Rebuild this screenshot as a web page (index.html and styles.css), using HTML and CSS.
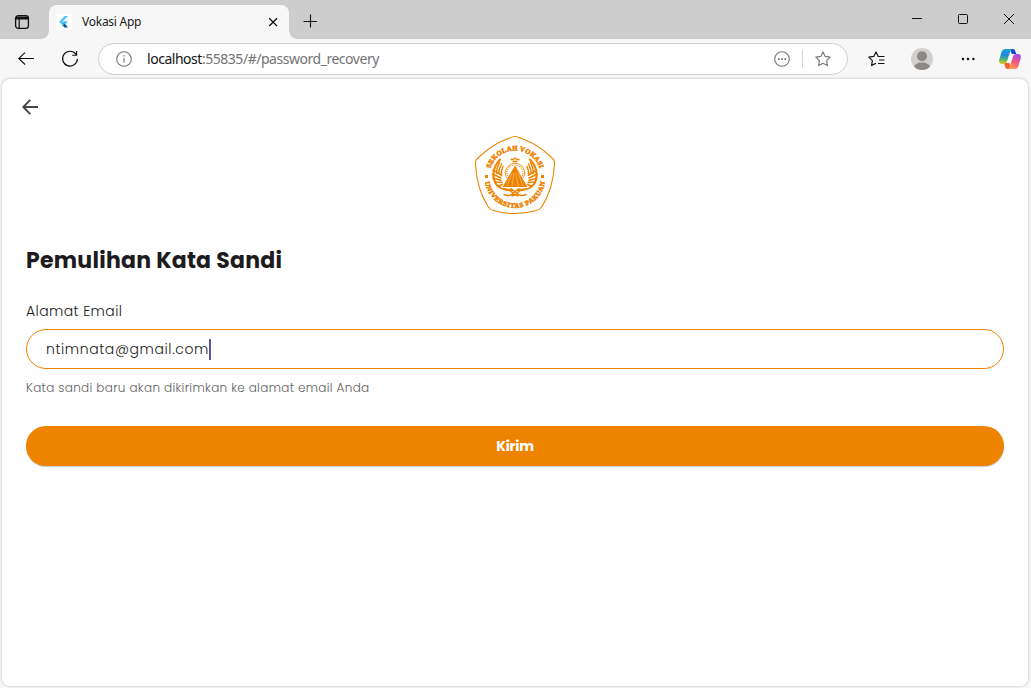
FILE: index.html
```html
<!DOCTYPE html>
<html lang="id">
<head>
<meta charset="utf-8">
<title>Vokasi App</title>
<link rel="stylesheet" href="styles.css">
</head>
<body>
<div class="window">
  <header class="titlebar">
    <svg class="workspaces" width="16" height="16" viewBox="0 0 16 16" fill="none" stroke="#111"><rect x="1.6" y="1.6" width="12.8" height="12.8" rx="2.6" stroke-width="1.3"/><path d="M2 4h12" stroke-width="3"/><path d="M5.2 5v9" stroke-width="1.2"/></svg>
    <div class="tab">
      <svg class="favicon" width="16" height="16" viewBox="0 0 16 16"><path fill="#fff" d="M0 0h16v16H0z"/><path fill="#54c5f8" d="M8.500 2h3.500L5 9.500 3 8z"/><path fill="#41b9f5" d="M8.500 7.300H12l-4 4-2-2z"/><path fill="#01579b" d="M6.500 11.300l2-2 3.500 4.200H8.500z"/><path fill="#29b6f6" d="M5 9.400l2-2 2 2-2 2z"/></svg>
      <span class="tab-title">Vokasi App</span>
      <svg class="tab-close" width="10" height="10" viewBox="0 0 10 10" stroke="#111" stroke-width="1.3"><path d="M1.200 1.200l7.800 7.800M9 1.200L1.200 9"/></svg>
    </div>
    <svg class="new-tab" width="14" height="14" viewBox="0 0 14 14" stroke="#111" stroke-width="1.1"><path d="M7.5.5v13M.5 7.5h13.5"/></svg>
    <div class="window-controls">
      <svg width="10" height="10" viewBox="0 0 10 10" stroke="#111"><path d="M0 4.5h10"/></svg>
      <svg width="10" height="10" viewBox="0 0 10 10" fill="none" stroke="#111"><rect x=".5" y=".5" width="9" height="9" rx="1"/></svg>
      <svg width="10" height="10" viewBox="0 0 10 10" stroke="#111"><path d="M0 0l10 10M10 0L0 10"/></svg>
    </div>
  </header>

  <nav class="toolbar">
    <svg class="nav-back" width="16" height="14" viewBox="0 0 16 14" fill="none" stroke="#111" stroke-width="1.1"><path d="M7 .6L.8 6.500 7 12.500M.8 6.500H16"/></svg>
    <svg class="nav-reload" width="18" height="18" viewBox="0 0 18 18" fill="none" stroke="#111" stroke-width="1.15"><path d="M15 4.3A7.4 7.4 0 1 0 16.4 9M15.6 1v4.2h-4.4"/></svg>
    <div class="address">
      <svg class="info" width="16" height="16" viewBox="0 0 16 16" fill="none" stroke="#767676" stroke-width="1.1"><circle cx="8" cy="8" r="7.3"/><path d="M8 7v4.8M8 4v1.6"/></svg>
      <span class="url"><b>localhost</b>:55835/#/password_recovery</span>
      <svg class="more-circle" width="16" height="16" viewBox="0 0 16 16"><circle cx="8" cy="8" r="7.3" fill="none" stroke="#767676" stroke-width="1.1"/><path d="M4 7.2h1.7v1.7H4zM7.2 7.2h1.7v1.7H7.2zM10.4 7.2h1.7v1.7h-1.7z" fill="#767676"/></svg>
      <i class="divider"></i>
      <svg class="star" width="16" height="16" viewBox="0 0 16 16" fill="none" stroke="#767676" stroke-width="1.1" stroke-linejoin="round"><path d="M8 .9l2.2 4.5 5 .7-3.6 3.5.8 5L8 12.3l-4.4 2.3.8-5L.8 6.1l5-.7z"/></svg>
    </div>
    <svg class="favorites" width="17" height="16" viewBox="0 0 17 16" fill="none" stroke="#111" stroke-width="1.15" stroke-linejoin="round"><path d="M10.3 5.5L8 .9 5.8 5.4l-5 .7 3.6 3.5-.8 5L8 12.3M9.500 5.5H16.500M11 9H16.500M10 12.5H16.500"/></svg>
    <svg class="avatar" width="22" height="22" viewBox="0 0 22 22"><defs><clipPath id="av"><circle cx="11" cy="11" r="11"/></clipPath></defs><g clip-path="url(#av)"><path fill="#d2d0ce" d="M0 0h22v22H0z"/><circle cx="11" cy="8.2" r="5" fill="#8b8886"/><ellipse cx="11" cy="19.3" rx="8" ry="4.7" fill="#8b8886"/></g></svg>
    <svg class="menu" width="14" height="4" viewBox="0 0 14 4" fill="#111"><circle cx="2" cy="2" r="1.25"/><circle cx="7" cy="2" r="1.25"/><circle cx="12.4" cy="2" r="1.25"/></svg>
    <svg class="copilot" width="22" height="20" viewBox="0 0 22 20">
      <defs>
        <linearGradient id="ca" x1="0" y1="0" x2="0" y2="1"><stop offset="0" stop-color="#16a5e8"/><stop offset=".4" stop-color="#1a87dc"/><stop offset=".7" stop-color="#55b86f"/><stop offset="1" stop-color="#f1c21b"/></linearGradient>
        <linearGradient id="cb" x1=".6" y1="0" x2=".3" y2="1"><stop offset="0" stop-color="#a34ee8"/><stop offset=".5" stop-color="#f1577d"/><stop offset="1" stop-color="#ff9c4a"/></linearGradient>
      </defs>
      <path fill="#1748c8" d="M11 0h3c1.500 0 2 1.200 2.500 2.800l.8 2.200h-4.500z"/>
      <path fill="#f4612d" d="M4.500 14h6L12 20H9c-2 0-2.400-1-3.500-4.500z"/>
      <path fill="url(#ca)" d="M6 0h7c-1 .4-1.500 1.500-2 3L8.500 11c-.7 2.700-1.500 4-3.500 4H3c-2.500 0-3.300-2-2.700-4.500L2.500 3.300C3.200 1 4.300 0 6 0z"/>
      <path fill="url(#cb)" d="M16 20H9c1-.4 1.500-1.500 2-3l2.500-8c.7-2.700 1.500-4 3.500-4H19c2.500 0 3.300 2 2.700 4.500l-2.200 7.200C18.800 19 17.700 20 16 20z"/>
      <path fill="#fff" d="M10.300 6h3.200L11 14H8z"/>
    </svg>
  </nav>

  <main class="page">
    <svg class="page-back" width="16" height="16" viewBox="0 0 16 16" fill="none" stroke="#47464a" stroke-width="1.9"><path d="M8.300.8L1.300 8l7 7.200M1.300 8H16"/></svg>
    <svg class="crest" width="100" height="94" viewBox="0 0 100 94">
      <defs>
        <path id="arc-top" d="M24 48.500A26 26 0 0 1 76 48.500"/>
        <path id="arc-bottom" d="M19.700 49.500A30.300 30.300 0 0 0 80.300 49.500"/>
        <g id="wing" fill="none" stroke="#ee8300" stroke-linecap="round">
          <path stroke-width="2" d="M35 31.500C26 41 26 55 36 60c4 2 8 1.500 11 2.500"/>
          <path stroke-width="1.500" d="M34.500 34.500c-2 4-3.500 8-2.500 11M36.500 36c-2 4-3 7-2.500 10M38 38.500c-1.500 3-2 6-1.500 9M28.200 42l8 5M27.500 46l8.500 4M28 50l8 2.500M30 54l7 .5M33 58l5-1.500M37 60l4-2.500"/>
          <path stroke-width="1.400" d="M39 66.500c4 2 8 1 10-2l5-4M41 62l4 .5 4 4 4 1.500"/>
        </g>
      </defs>
      <path fill="none" stroke="#ee8300" stroke-width="1.100" stroke-linejoin="round" d="M50 8.500c3 0 5 1.600 8 2.600 12 4.400 20 10.400 28.500 18.400 3 2.800 3.200 3.500 3 7.500-1 15-4.500 29-12.500 41.500-1.500 2.500-2.500 3.200-5.500 4-14 4-29 4-43 0-3-.8-4-1.500-5.500-4C15 66 11.500 52 10.500 37c-.2-4 0-4.700 3-7.500C22 21.500 30 15.500 42 11.100c3-1 5-2.600 8-2.600z"/>
      <text class="crest-text"><textPath href="#arc-top" startOffset="50%" text-anchor="middle" textLength="65">SEKOLAH VOKASI</textPath></text>
      <text class="crest-text"><textPath href="#arc-bottom" startOffset="50%" text-anchor="middle" textLength="86">UNIVERSITAS PAKUAN</textPath></text>
      <path fill="#ee8300" d="M20 47h3v3h-3zM76 47h3v3h-3z"/>
      <use href="#wing"/>
      <use href="#wing" transform="matrix(-1 0 0 1 100 0)"/>
      <circle cx="50" cy="45" r="9.700" fill="none" stroke="#ee8300" stroke-width=".8"/>
      <circle cx="50" cy="45" r="8" fill="none" stroke="#ee8300" stroke-width="1.100" stroke-dasharray="1 1"/>
      <path fill="none" stroke="#ee8300" stroke-width="1.300" d="M45.500 31.500h2.500l2-1.500 2 1.500h2.500M47.500 33.500h5"/>
      <path fill="#fff" d="M50 36.500L64 60H36z"/>
      <path fill="#ee8300" d="M50 37.500L62.500 59h-25z"/>
      <path stroke="#fff" stroke-width=".35" fill="none" d="M47 45L42 58M49 45l-2 13M51 45l2 13M53 45l5 13"/>
    </svg>
    <h1 class="heading">Pemulihan Kata Sandi</h1>
    <label class="label">Alamat Email</label>
    <div class="field"><span class="value">ntimnata@gmail.com</span><i class="caret"></i></div>
    <p class="hint">Kata sandi baru akan dikirimkan ke alamat email Anda</p>
    <button class="submit"><span>Kirim</span></button>
  </main>
</div>
</body>
</html>
```
FILE: styles.css
```css
* { box-sizing: border-box; }
body { margin: 0; overflow: hidden; font-family: Poppins, Inter, sans-serif; }
svg { display: block; flex: none; }
.window { width: 1031px; height: 688px; background: #f7f7f7; display: flex; flex-direction: column; overflow: hidden; }

.titlebar { height: 39px; flex: none; background: #cdcdcd; display: flex; }
.workspaces { margin: 14px 0 0 14px; }
.tab { position: relative; width: 240px; height: 34px; margin: 5px 0 0 19px; padding: 0 11px 0 7px; border-radius: 8px 8px 0 0; background: #f7f7f7; display: flex; align-items: center; }
.tab::before, .tab::after { content: ""; position: absolute; bottom: 0; width: 8px; height: 8px; }
.tab::before { left: -8px; background: radial-gradient(circle at 0 0, #cdcdcd 7.500px, #f7f7f7 8px); }
.tab::after { right: -8px; background: radial-gradient(circle at 100% 0, #cdcdcd 7.500px, #f7f7f7 8px); }
.tab-title { flex: 1; margin: -1px 0 0 10px; font: 12px "Noto Sans", sans-serif; letter-spacing: -0.250px; color: #1b1b1b; }
.tab-close { margin-top: 0; }
.new-tab { margin: 14px 0 0 14px; }
.window-controls { margin: 14px 17px 0 auto; display: flex; gap: 36px; }

.toolbar { height: 40px; flex: none; display: flex; align-items: center; }
.nav-back { margin-left: 18px; }
.nav-reload { margin-left: 27px; }
.address { width: 750px; height: 32px; margin: 0 0 0 19px; padding: 0 16px 0 17px; background: #fff; border: 1px solid #cfcfcf; border-radius: 16px; display: flex; align-items: center; }
.url { flex: 1; margin: -1px 0 0 15px; font: 14px "Noto Sans", sans-serif; letter-spacing: -0.470px; color: #737373; }
.url b { font-weight: 400; color: #111; }
.divider { width: 1px; height: 18px; margin: 0 12px; background: #d4d4d4; }
.favorites { margin-left: 20px; }
.avatar { margin-left: 26px; }
.menu { margin-left: 28px; }
.copilot { margin-left: 24px; }

.page { width: 1026px; height: 607px; flex: none; margin-left: 2px; padding: 0 24px; background: #fff; border-radius: 8px; box-shadow: 0 0 3px rgba(0, 0, 0, .25); display: flex; flex-direction: column; }
.page-back { margin: 20px 0 0 -4px; }
.crest { margin-top: 13px; align-self: center; }
.crest-text { font: 900 6.800px "Liberation Serif", serif; fill: #ee8300; stroke: #ee8300; stroke-width: .6px; }
.heading { margin: 23px 0 0; font-size: 22px; line-height: 32px; font-weight: 700; letter-spacing: .25px; color: #1d1b20; }
.label { margin-top: 24px; font-size: 14px; font-weight: 300; line-height: 21px; letter-spacing: .4px; color: #1d1b20; }
.field { height: 40px; margin-top: 7px; padding-left: 19px; border: 1px solid #ee8300; border-radius: 20px; display: flex; align-items: center; }
.value { font-size: 14px; font-weight: 300; letter-spacing: .6px; color: #1d1b20; }
.caret { width: 2px; height: 21px; background: #6750a4; }
.hint { margin: 10px 0 0; font-size: 12px; font-weight: 300; line-height: 18px; letter-spacing: .34px; color: #606060; }
.submit { height: 40px; margin: 29px 0 0; border: 0; border-radius: 20px; background: #ee8300; color: #fff; font: 700 14px Poppins, Inter, sans-serif; letter-spacing: -.3px; box-shadow: 0 1px 1px rgba(0, 0, 0, .22); }
```
